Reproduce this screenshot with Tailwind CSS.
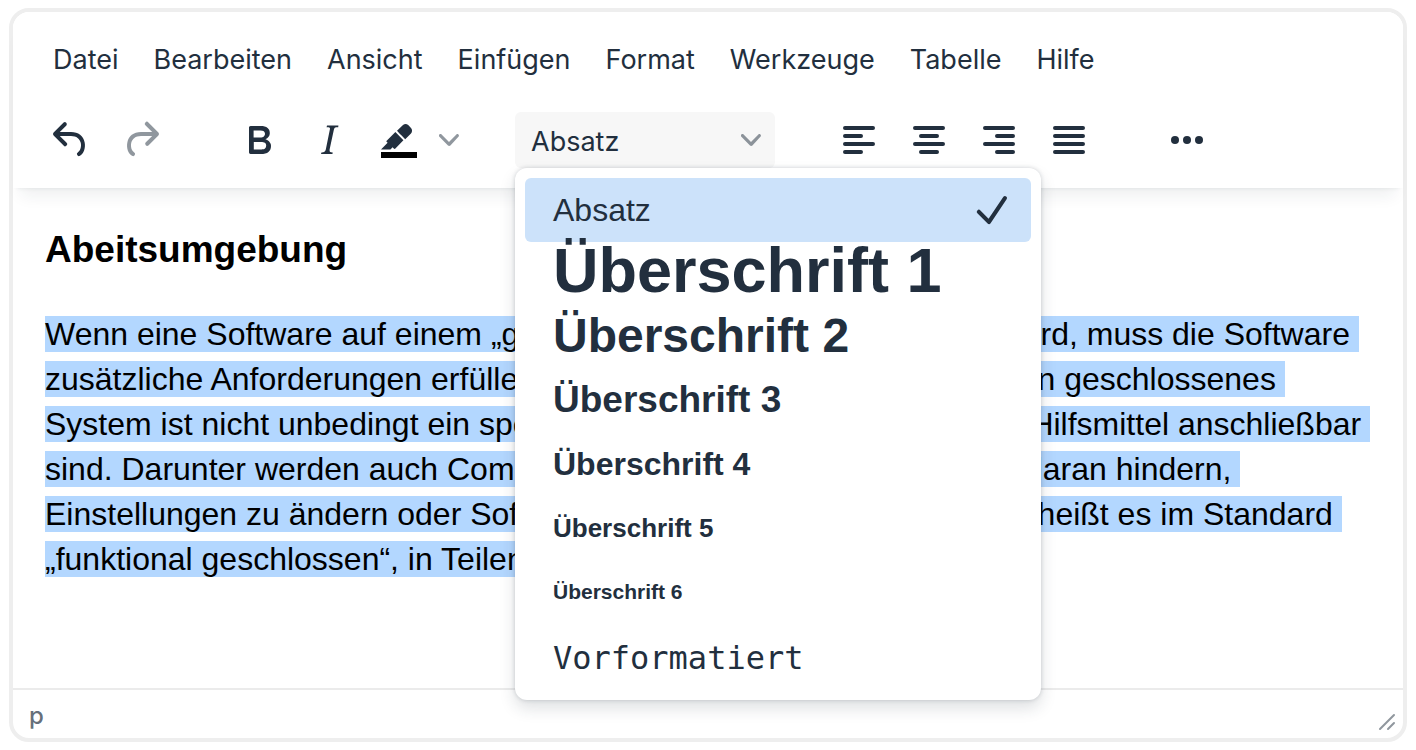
<!DOCTYPE html>
<html lang="de">

<head>
    <meta charset="UTF-8" />
    <meta name="viewport" content="width=device-width, initial-scale=1.0" />
    <title>Editor</title>
    <script src="https://cdn.jsdelivr.net/npm/@tailwindcss/browser@4"></script>
</head>

<body class="bg-white text-[#222f3e]">
    <div class="flex flex-col min-h-screen px-[9px] py-2">
        <div class="flex flex-col grow border-4 border-[#eeeeee] rounded-[20px] bg-white">
            <!-- NOTE: Menu bar and toolbar -->
            <header class="relative z-10 rounded-t-2xl bg-white shadow-[0_4px_4px_-4px_rgba(34,47,62,0.1),0_16px_16px_-8px_rgba(34,47,62,0.07)] font-[Inter,sans-serif]">
                <nav class="flex items-center gap-[35px] h-24 pl-10 text-[27px]">
                    <button type="button">Datei</button>
                    <button type="button">Bearbeiten</button>
                    <button type="button">Ansicht</button>
                    <button type="button">Einfügen</button>
                    <button type="button">Format</button>
                    <button type="button">Werkzeuge</button>
                    <button type="button">Tabelle</button>
                    <button type="button">Hilfe</button>
                </nav>

                <div class="flex items-center h-20 pl-[34px] pb-4">
                    <div class="flex gap-[22px]">
                        <button type="button" aria-label="Rückgängig">
                            <svg class="size-12 fill-[#222f3e]" viewBox="0 0 24 24"><path d="M6.4 8H12c3.7 0 6.2 2 6.8 5.1.6 2.7-.4 5.6-2.3 6.8a1 1 0 0 1-1-1.8c1.1-.6 1.8-2.7 1.4-4.6-.5-2.1-2.1-3.5-4.9-3.5H6.4l3.3 3.3a1 1 0 1 1-1.4 1.4l-5-5a1 1 0 0 1 0-1.4l5-5a1 1 0 0 1 1.4 1.4L6.4 8Z"/></svg>
                        </button>
                        <button type="button" aria-label="Wiederholen" disabled>
                            <svg class="size-12 fill-[#222f3e]/50" viewBox="0 0 24 24"><path d="M17.6 10H12c-2.8 0-4.4 1.4-4.9 3.5-.4 2 .3 4 1.4 4.6a1 1 0 1 1-1 1.8c-2-1.2-2.9-4.1-2.3-6.8.6-3 3-5.1 6.8-5.1h5.6l-3.3-3.3a1 1 0 1 1 1.4-1.4l5 5a1 1 0 0 1 0 1.4l-5 5a1 1 0 0 1-1.4-1.4l3.3-3.3Z"/></svg>
                        </button>
                    </div>

                    <div class="flex gap-[22px] ml-[70px]">
                        <button type="button" aria-label="Fett">
                            <svg class="size-12 fill-[#222f3e]" viewBox="0 0 24 24"><path d="M7.8 19c-.3 0-.5 0-.6-.2l-.2-.5V5.7c0-.2 0-.4.2-.5l.6-.2h5c1.5 0 2.7.3 3.5 1 .7.6 1.1 1.4 1.1 2.5a3 3 0 0 1-.6 1.9c-.4.6-1 1-1.6 1.2.4.1.9.3 1.3.6s.8.7 1 1.2c.4.4.5 1 .5 1.6 0 1.3-.4 2.3-1.3 3-.8.7-2.1 1-3.8 1H7.8Zm5-8.3c.6 0 1.2-.1 1.6-.5.4-.3.6-.7.6-1.3 0-1.1-.8-1.7-2.3-1.7H9.3v3.5h3.4Zm.5 6c.7 0 1.3-.1 1.7-.4.4-.4.6-.9.6-1.5s-.2-1-.7-1.4c-.4-.3-1-.4-2-.4H9.4v3.8h4Z" fill-rule="evenodd"/></svg>
                        </button>
                        <button type="button" aria-label="Kursiv">
                            <svg class="size-12 fill-[#222f3e]" viewBox="0 0 24 24"><path d="m16.7 4.7-.1.9h-.3c-.6 0-1 0-1.4.3-.3.3-.4.6-.5 1.1l-2.1 9.8v.6c0 .5.4.8 1.4.8h.2l-.2.8H8l.2-.8h.2c1.1 0 1.8-.5 2-1.5l2-9.8.1-.5c0-.6-.4-.8-1.4-.8h-.3l.2-.9h5.7Z"/></svg>
                        </button>
                        <button type="button" aria-label="Hintergrundfarbe">
                            <svg class="size-12 fill-[#222f3e]" viewBox="0 0 24 24"><path class="fill-black" d="M3 18h18v3H3z"/><path d="M7.7 16.7H3l3.3-3.3-.7-.8L10.2 8l4 4.1-4 4.2c-.2.2-.6.2-.8 0l-.6-.7-1.1 1.1Zm5-7.5L11 7.4l3-2.9a2 2 0 0 1 2.6 0L18 6c.7.7.7 2 0 2.7l-2.9 2.9-1.8-1.8-.5-.6Z"/></svg>
                        </button>
                    </div>
                    <button type="button" aria-label="Farbe wählen" class="ml-4">
                        <svg class="size-5 fill-[#222f3e]/50" viewBox="0 0 10 10"><path d="M8.7 2.2c.3-.3.8-.3 1 0 .4.4.4.9 0 1.2L5.7 7.8c-.3.3-.9.3-1.2 0L.2 3.4a.8.8 0 0 1 0-1.2c.3-.3.8-.3 1.1 0L5 6l3.7-3.8Z"/></svg>
                    </button>

                    <!-- NOTE: Block format drop-down with its open list -->
                    <div class="relative ml-14">
                        <select aria-label="Absatzformat" class="appearance-none block w-[260px] h-14 pl-4 pt-1 rounded-md bg-[#f7f7f7] text-[27px]">
                            <option>Absatz</option>
                            <option>Überschrift 1</option>
                            <option>Überschrift 2</option>
                            <option>Überschrift 3</option>
                            <option>Überschrift 4</option>
                            <option>Überschrift 5</option>
                            <option>Überschrift 6</option>
                            <option>Vorformatiert</option>
                        </select>
                        <svg class="absolute right-[14px] top-[18px] size-5 fill-[#222f3e]/50 pointer-events-none" viewBox="0 0 10 10"><path d="M8.7 2.2c.3-.3.8-.3 1 0 .4.4.4.9 0 1.2L5.7 7.8c-.3.3-.9.3-1.2 0L.2 3.4a.8.8 0 0 1 0-1.2c.3-.3.8-.3 1.1 0L5 6l3.7-3.8Z"/></svg>

                        <div role="menu" class="absolute left-0 top-full w-[526px] p-[10px] rounded-xl bg-white shadow-[0_0_4px_rgba(34,47,62,0.2),0_8px_16px_rgba(34,47,62,0.15)] font-['Liberation_Sans',Arial,sans-serif]">
                            <button type="button" role="menuitemradio" aria-checked="true" class="flex items-center justify-between w-full h-16 pl-7 pr-4 rounded-md bg-[#cce2fa] text-[32px]">
                                Absatz
                                <svg class="size-12 fill-[#222f3e]" viewBox="0 0 24 24"><path d="M18.2 5.4a1 1 0 0 1 1.6 1.2l-8 12a1 1 0 0 1-1.5.1l-5-5a1 1 0 1 1 1.4-1.4l4.1 4.1 7.4-11Z"/></svg>
                            </button>
                            <button type="button" role="menuitemradio" aria-checked="false" class="flex items-center w-full h-16 pl-7 pb-2 font-bold text-[63px]">Überschrift 1</button>
                            <button type="button" role="menuitemradio" aria-checked="false" class="flex items-center w-full h-16 pl-7 pb-1 font-bold text-[48px]">Überschrift 2</button>
                            <button type="button" role="menuitemradio" aria-checked="false" class="flex items-center w-full h-16 pl-7 pb-1 font-bold text-[37px]">Überschrift 3</button>
                            <button type="button" role="menuitemradio" aria-checked="false" class="flex items-center w-full h-16 pl-7 pb-1 font-bold text-[32px]">Überschrift 4</button>
                            <button type="button" role="menuitemradio" aria-checked="false" class="flex items-center w-full h-16 pl-7 pb-1 font-bold text-[26px]">Überschrift 5</button>
                            <button type="button" role="menuitemradio" aria-checked="false" class="flex items-center w-full h-16 pl-7 pb-1 font-bold text-[21px]">Überschrift 6</button>
                            <button type="button" role="menuitemradio" aria-checked="false" class="flex items-center w-full h-16 pl-7 font-['DejaVu_Sans_Mono',monospace] text-[32px]">Vorformatiert</button>
                        </div>
                    </div>

                    <div class="flex gap-[22px] ml-[60px]">
                        <button type="button" aria-label="Linksbündig">
                            <svg class="size-12 fill-none stroke-[#222f3e] stroke-2" stroke-linecap="round" viewBox="0 0 24 24"><path d="M5 6h14M5 10h8M5 14h14M5 18h8"/></svg>
                        </button>
                        <button type="button" aria-label="Zentriert">
                            <svg class="size-12 fill-none stroke-[#222f3e] stroke-2" stroke-linecap="round" viewBox="0 0 24 24"><path d="M5 6h14M8 10h8M5 14h14M8 18h8"/></svg>
                        </button>
                        <button type="button" aria-label="Rechtsbündig">
                            <svg class="size-12 fill-none stroke-[#222f3e] stroke-2" stroke-linecap="round" viewBox="0 0 24 24"><path d="M5 6h14M11 10h8M5 14h14M11 18h8"/></svg>
                        </button>
                        <button type="button" aria-label="Blocksatz">
                            <svg class="size-12 fill-none stroke-[#222f3e] stroke-2" stroke-linecap="round" viewBox="0 0 24 24"><path d="M5 6h14M5 10h14M5 14h14M5 18h14"/></svg>
                        </button>
                    </div>
                    <button type="button" aria-label="Mehr" class="ml-[70px]">
                        <svg class="size-12 fill-[#222f3e]" viewBox="0 0 24 24"><circle cx="6" cy="12" r="2"/><circle cx="12" cy="12" r="2"/><circle cx="18" cy="12" r="2"/></svg>
                    </button>
                </div>
            </header>

            <!-- NOTE: Document -->
            <main class="grow px-8 pt-9 text-black font-['Liberation_Sans',Arial,sans-serif]">
                <h3 class="text-[37px] leading-[52px] font-bold">Abeitsumgebung</h3>
                <p class="mt-9 text-[32px] leading-[45px] whitespace-pre"><span class="bg-[#b3d7ff]">Wenn eine Software auf einem „geschlossenen System“ ausgeführt wird, muss die Software <br>zusätzliche Anforderungen erfüllen, um deutlich barrierefrei zu sein. Ein geschlossenes <br>System ist nicht unbedingt ein spezielles Gerät, an das wirklich keine Hilfsmittel anschließbar <br>sind. Darunter werden auch Computer verstanden, die Nutzer immer daran hindern, <br>Einstellungen zu ändern oder Software selbst zu installieren. Deshalb heißt es im Standard <br>„funktional geschlossen“, in Teilen.</span></p>
            </main>

            <!-- NOTE: Status bar -->
            <footer class="flex items-end justify-between h-[50px] border-t-2 border-[#ebebeb] pl-4 pr-[6px] pb-[6px] font-[Inter,sans-serif] text-[#222f3e]/70">
                <button type="button" class="text-2xl font-medium">p</button>
                <button type="button" aria-label="Größe ändern">
                    <svg class="block size-5 fill-none stroke-[#222f3e]/50" stroke-linecap="round" viewBox="0 0 10 10"><path d="M8.5 1.5l-7 7M8.5 5.5l-3 3"/></svg>
                </button>
            </footer>
        </div>
    </div>
</body>

</html>
